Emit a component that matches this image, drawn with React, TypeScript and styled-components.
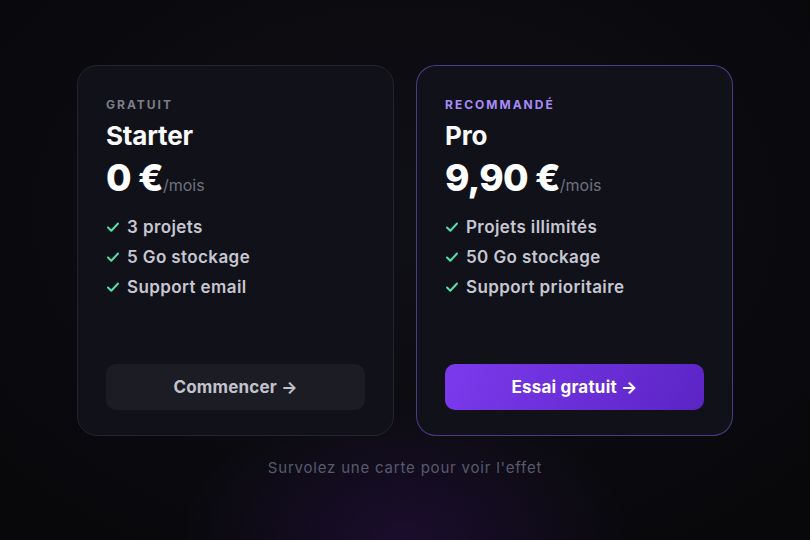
import styled, { createGlobalStyle } from 'styled-components'

const GlobalStyle = createGlobalStyle`
  html, body {
    margin: 0;
    padding: 0;
    height: 100%;
  }
  body {
    background: #0a0a0f;
    font-family: Inter, "Noto Sans", sans-serif;
  }
`

type Plan = {
  tag: string
  name: string
  price: string
  features: string[]
  cta: string
  featured?: boolean
}

const plans: Plan[] = [
  {
    tag: 'GRATUIT',
    name: 'Starter',
    price: '0 €',
    features: ['3 projets', '5 Go stockage', 'Support email'],
    cta: 'Commencer →',
  },
  {
    tag: 'RECOMMANDÉ',
    name: 'Pro',
    price: '9,90 €',
    features: ['Projets illimités', '50 Go stockage', 'Support prioritaire'],
    cta: 'Essai gratuit →',
    featured: true,
  },
]

function Check() {
  return (
    <svg width="14" height="14" viewBox="0 0 14 14" fill="none">
      <path d="M2 7.5 L5.3 10.8 L12 3.5" stroke="#52dfa8" strokeWidth="2" strokeLinecap="round" strokeLinejoin="round" />
    </svg>
  )
}

function App() {
  return (
    <Page>
      <GlobalStyle />
      <Cards>
        {plans.map((p) => (
          <Card key={p.name} $featured={p.featured}>
            <Tag $featured={p.featured}>{p.tag}</Tag>
            <Name>{p.name}</Name>
            <PriceRow>
              <Price>{p.price}</Price>
              <Per>/mois</Per>
            </PriceRow>
            <Features>
              {p.features.map((f) => (
                <Feature key={f}>
                  <Check />
                  {f}
                </Feature>
              ))}
            </Features>
            <Cta $featured={p.featured}>{p.cta}</Cta>
          </Card>
        ))}
      </Cards>
      <Hint>Survolez une carte pour voir l'effet</Hint>
    </Page>
  )
}

const Page = styled.div`
  min-height: 100vh;
  box-sizing: border-box;
  padding-top: 65px;
  display: flex;
  flex-direction: column;
  align-items: center;
  background:
    radial-gradient(ellipse 320px 200px at 50% 100%, rgba(88, 28, 160, 0.22), transparent 70%),
    radial-gradient(ellipse 700px 500px at 50% 40%, #0f0f16, #08080b 80%);
`

const Cards = styled.div`
  display: flex;
  gap: 22px;
`

const Card = styled.div<{ $featured?: boolean }>`
  width: 317px;
  height: 371px;
  box-sizing: border-box;
  padding: 32px 28px 25px;
  border-radius: 20px;
  background: #111219;
  border: 1px solid ${(p) => (p.$featured ? 'rgba(124, 92, 230, 0.55)' : '#23242e')};
  display: flex;
  flex-direction: column;
`

const Tag = styled.div<{ $featured?: boolean }>`
  font-size: 12px;
  font-weight: 700;
  letter-spacing: 2px;
  line-height: 14px;
  color: ${(p) => (p.$featured ? '#a78bfa' : '#7c7d8a')};
`

const Name = styled.div`
  margin-top: 9px;
  font-size: 26px;
  font-weight: 700;
  line-height: 30px;
  color: #fafafa;
  letter-spacing: -0.2px;
`

const PriceRow = styled.div`
  margin-top: 5px;
  display: flex;
  align-items: baseline;
`

const Price = styled.span`
  font-size: 37px;
  font-weight: 800;
  line-height: 44px;
  color: #ffffff;
  letter-spacing: -0.8px;
`

const Per = styled.span`
  font-size: 16px;
  color: #6f707e;
`

const Features = styled.ul`
  list-style: none;
  margin: 17px 0 0;
  padding: 0;
  display: flex;
  flex-direction: column;
  gap: 10px;
`

const Feature = styled.li`
  display: flex;
  align-items: center;
  gap: 7px;
  font-size: 17px;
  font-weight: 600;
  line-height: 20px;
  letter-spacing: 0.4px;
  color: #c6c7d2;
`

const Cta = styled.button<{ $featured?: boolean }>`
  margin-top: auto;
  height: 46px;
  border: none;
  border-radius: 10px;
  font-family: inherit;
  font-size: 17px;
  font-weight: 700;
  letter-spacing: 0.2px;
  cursor: pointer;
  color: ${(p) => (p.$featured ? '#ffffff' : '#c2c3cd')};
  background: ${(p) => (p.$featured ? 'linear-gradient(120deg, #7c3aed, #5b24c4)' : '#1b1c24')};
`

const Hint = styled.div`
  margin-top: 22px;
  font-size: 15px;
  letter-spacing: 0.8px;
  color: #585a6c;
`

export default App
